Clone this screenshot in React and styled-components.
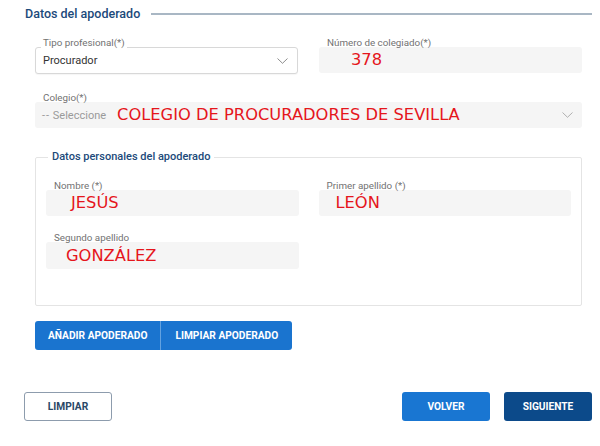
import React from "react";
import styled, { createGlobalStyle } from "styled-components";

const Global = createGlobalStyle`
  html, body { margin: 0; padding: 0; background: #fff; }
  body { font-family: Roboto, "Noto Sans", sans-serif; }
  * { box-sizing: border-box; }
`;

const Page = styled.div`
  width: 600px;
  padding: 6px 8px 0 24px;
`;

const SectionHead = styled.div`
  display: flex;
  align-items: center;
  gap: 11px;
  margin-left: 1px;
  height: 16px;
`;

const SectionTitle = styled.h2`
  margin: 0;
  font-size: 12.5px;
  line-height: 16px;
  font-weight: 500;
  color: #1c4a7a;
  white-space: nowrap;
`;

const Rule = styled.div`
  flex: 1;
  height: 2px;
  background: #a9b7c4;
`;

const Body = styled.div`
  padding: 0 10px 0 11px;
  margin-top: 15px;
`;

const Grid = styled.div`
  display: grid;
  grid-template-columns: 1fr 1fr;
  column-gap: ${(p) => p.$gap}px;
  row-gap: ${(p) => p.$rowGap}px;
`;

const Field = styled.div`
  display: flex;
  flex-direction: column;
  grid-column: ${(p) => (p.$wide ? "1 / -1" : "auto")};
`;

const Label = styled.label`
  align-self: flex-start;
  position: relative;
  z-index: 1;
  margin: 0 0 -1px 6px;
  padding: 0 2px;
  font-size: 9.8px;
  line-height: 11px;
  color: #727272;
  background: ${(p) => (p.$notch ? "#fff" : "transparent")};
`;

const Box = styled.div`
  height: ${(p) => p.$h || 26}px;
  display: flex;
  align-items: center;
  padding: 0 7px 0 7px;
  border-radius: 3px;
  background: ${(p) => (p.$outlined ? "#fff" : "#f5f5f5")};
  border: ${(p) => (p.$outlined ? "1px solid #d8d8d8" : "none")};
  box-shadow: ${(p) => (p.$outlined ? "0 1px 1px rgba(0,0,0,0.04)" : "none")};
`;

const Value = styled.span`
  font-size: 11px;
  color: #333;
`;

const Placeholder = styled.span`
  font-size: 11px;
  color: #9a9a9a;
  font-variant-ligatures: none;
`;

const Dashes = styled.span`
  letter-spacing: 1px;
`;

const Mark = styled.span`
  font-family: "DejaVu Sans", sans-serif;
  font-size: 16.3px;
  line-height: 18px;
  color: #e5161c;
  margin-left: ${(p) => p.$indent}px;
`;

const Chevron = styled.svg`
  margin-left: auto;
  margin-right: 2px;
  flex: none;
`;

const Fieldset = styled.fieldset`
  margin: 22px 0 0;
  min-width: 0;
  border: 1.5px solid #e4e4e4;
  border-radius: 2px;
  padding: 16px 10px 36px;
`;

const Legend = styled.legend`
  margin-left: 2px;
  padding: 0 4px;
  font-size: 11px;
  line-height: 14px;
  font-weight: 500;
  color: #1c4a7a;
`;

const ButtonGroup = styled.div`
  display: flex;
  margin-top: 15px;
`;

const GroupButton = styled.button`
  height: 29px;
  padding: 0 ${(p) => (p.$divider ? 14 : 13)}px;
  border: none;
  border-left: ${(p) => (p.$divider ? "1px solid #63a2e0" : "none")};
  background: #1a74cf;
  color: #fff;
  font-family: Roboto, sans-serif;
  font-size: 10.2px;
  font-weight: 700;
  border-radius: ${(p) => (p.$first ? "3px 0 0 3px" : "0 3px 3px 0")};
`;

const Footer = styled.div`
  display: flex;
  justify-content: space-between;
  align-items: center;
  margin-top: 42px;
`;

const FooterRight = styled.div`
  display: flex;
  gap: 14px;
`;

const ActionButton = styled.button`
  width: 88px;
  height: 29px;
  border-radius: 3px;
  font-family: Roboto, sans-serif;
  font-size: 10.2px;
  font-weight: 700;
  cursor: pointer;
  border: ${(p) => (p.$variant === "outline" ? "1px solid #8d9cad" : "none")};
  color: ${(p) => (p.$variant === "outline" ? "#2b4866" : "#fff")};
  background: ${(p) =>
    p.$variant === "outline" ? "#fff" : p.$variant === "dark" ? "#0c4a8a" : "#1976d2"};
`;

const ChevronIcon = ({ color = "#808080" }) => (
  <Chevron width="11" height="6" viewBox="0 0 11 6">
    <polyline points="0.5,0.5 5.5,5.3 10.5,0.5" fill="none" stroke={color} strokeWidth="0.9" />
  </Chevron>
);

export default function App() {
  return (
    <Page>
      <Global />
      <SectionHead>
        <SectionTitle>Datos del apoderado</SectionTitle>
        <Rule />
      </SectionHead>
      <Body>
        <Grid $gap={21} $rowGap={18}>
          <Field>
            <Label $notch>Tipo profesional(*)</Label>
            <Box $outlined $h={27}>
              <Value>Procurador</Value>
              <ChevronIcon />
            </Box>
          </Field>
          <Field>
            <Label>Número de colegiado(*)</Label>
            <Box>
              <Mark $indent={25}>378</Mark>
            </Box>
          </Field>
          <Field $wide>
            <Label>Colegio(*)</Label>
            <Box>
              <Placeholder>
                <Dashes>--</Dashes> Seleccione
              </Placeholder>
              <Mark $indent={11}>COLEGIO DE PROCURADORES DE SEVILLA</Mark>
              <ChevronIcon color="#a8a8a8" />
            </Box>
          </Field>
        </Grid>
        <Fieldset>
          <Legend>Datos personales del apoderado</Legend>
          <Grid $gap={20} $rowGap={16}>
            <Field>
              <Label>Nombre (*)</Label>
              <Box>
                <Mark $indent={18}>JESÚS</Mark>
              </Box>
            </Field>
            <Field>
              <Label>Primer apellido (*)</Label>
              <Box>
                <Mark $indent={10}>LEÓN</Mark>
              </Box>
            </Field>
            <Field>
              <Label>Segundo apellido</Label>
              <Box $h={27}>
                <Mark $indent={13}>GONZÁLEZ</Mark>
              </Box>
            </Field>
          </Grid>
        </Fieldset>
        <ButtonGroup>
          <GroupButton $first>AÑADIR APODERADO</GroupButton>
          <GroupButton $divider>LIMPIAR APODERADO</GroupButton>
        </ButtonGroup>
      </Body>
      <Footer>
        <ActionButton $variant="outline">LIMPIAR</ActionButton>
        <FooterRight>
          <ActionButton $variant="primary">VOLVER</ActionButton>
          <ActionButton $variant="dark">SIGUIENTE</ActionButton>
        </FooterRight>
      </Footer>
    </Page>
  );
}
